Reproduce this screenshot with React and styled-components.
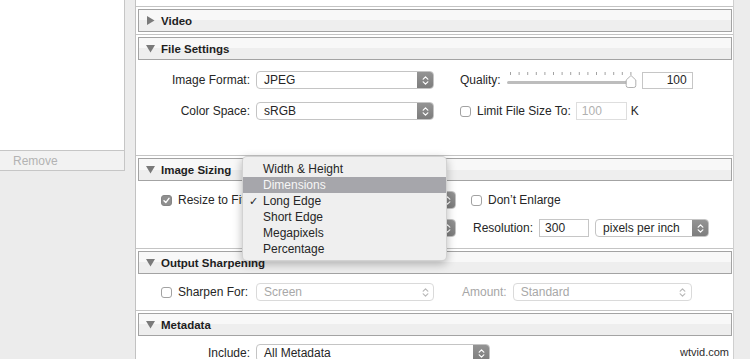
import styled, { createGlobalStyle } from "styled-components";

/* ================================
   Global
   ================================ */

const GlobalStyle = createGlobalStyle`
  html, body {
    margin: 0;
    padding: 0;
    background: #ececec;
  }
  body {
    font-family: "Liberation Sans", Arial, sans-serif;
    overflow: hidden;
  }
`;

/* ================================
   Frame
   ================================ */

const Window = styled.div`
  position: relative;
  display: flex;
  width: 750px;
  height: 359px;
  overflow: hidden;
  background: #ececec;
  color: #262626;
  font-size: 12px;
`;

const Sidebar = styled.div`
  width: 125px;
  flex-shrink: 0;
  display: flex;
  flex-direction: column;
`;

const PresetList = styled.div`
  height: 150px;
  background: #fff;
  border-right: 1px solid #c6c6c6;
  border-bottom: 1px solid #c6c6c6;
`;

const RemoveBar = styled.div`
  height: 19px;
  display: flex;
  align-items: center;
  padding-left: 13px;
  background: #f2f2f2;
  border-right: 1px solid #c6c6c6;
  border-bottom: 1px solid #c6c6c6;
  color: #b3b3b3;
`;

const Main = styled.div`
  width: 597px;
  margin-left: 10px;
  flex-shrink: 0;
  display: flex;
  flex-direction: column;
  padding-top: 6px;
  background: #fff;
  border-left: 1px solid #c2c2c2;
  border-right: 1px solid #cfcfcf;
`;

/* ================================
   Sections
   ================================ */

const Section = styled.div`
  border-top: 1px solid #c4c4c4;
  padding-top: 2px;
`;

const Header = styled.div`
  height: 21px;
  margin: 0 1px 0 2px;
  display: flex;
  align-items: center;
  gap: 6px;
  padding-left: 7px;
  border: 1px solid #a3a3a3;
  background: linear-gradient(#f8f8f8 0 50%, #eeeeee 50%);
  font-size: 11.5px;
  font-weight: bold;
  color: #1e1e1e;
`;

const Body = styled.div`
  height: ${(p) => p.$h}px;
  padding-top: ${(p) => p.$pad || 0}px;
  box-sizing: border-box;
  display: flex;
  flex-direction: column;
  gap: ${(p) => p.$gap || 0}px;
`;

const Row = styled.div`
  display: flex;
  align-items: center;
  height: 18px;
`;

const LabelCell = styled.div`
  width: 120px;
  flex-shrink: 0;
  box-sizing: border-box;
  display: flex;
  align-items: center;
  justify-content: ${(p) => (p.$left ? "flex-start" : "flex-end")};
  gap: 6px;
  padding: ${(p) => (p.$left ? "0 0 0 25px" : "0 6px 0 0")};
  white-space: nowrap;
`;

const Text = styled.span`
  white-space: nowrap;
  margin-left: ${(p) => p.$ml || 0}px;
  color: ${(p) => (p.$muted ? "#a6a6a6" : "inherit")};
`;

/* ================================
   Controls
   ================================ */

const SelectBox = styled.div`
  display: flex;
  align-items: center;
  width: ${(p) => p.$w}px;
  height: 18px;
  margin-left: ${(p) => p.$ml || 0}px;
  box-sizing: border-box;
  flex-shrink: 0;
  border: 1px solid ${(p) => (p.$disabled ? "#dadada" : "#c4c4c4")};
  border-radius: 4px;
  background: #fff;
  padding-left: 7px;
  overflow: hidden;
  color: ${(p) => (p.$disabled ? "#a8a8a8" : "#262626")};
`;

const Stepper = styled.span`
  margin-left: auto;
  width: 16px;
  align-self: stretch;
  display: flex;
  align-items: center;
  justify-content: center;
  background: ${(p) =>
    p.$disabled ? "transparent" : "linear-gradient(#949494, #7d7d7d)"};
`;

const Field = styled.div`
  width: ${(p) => p.$w}px;
  height: ${(p) => p.$h || 18}px;
  margin-left: ${(p) => p.$ml || 0}px;
  box-sizing: border-box;
  flex-shrink: 0;
  display: flex;
  align-items: center;
  justify-content: ${(p) => (p.$right ? "flex-end" : "flex-start")};
  padding: 0 5px;
  border: 1px solid ${(p) => (p.$disabled ? "#dedede" : "#c6c6c6")};
  background: #fff;
  color: ${(p) => (p.$disabled ? "#b0b0b0" : "#262626")};
`;

const Box = styled.span`
  width: 11px;
  height: 11px;
  flex-shrink: 0;
  margin-left: ${(p) => p.$ml || 0}px;
  box-sizing: border-box;
  border-radius: 3px;
  display: flex;
  align-items: center;
  justify-content: center;
  border: 1px solid ${(p) => (p.$checked ? "#858585" : "#a2a2a2")};
  background: ${(p) => (p.$checked ? "#8f8f8f" : "#fff")};
`;

const Menu = styled.div`
  position: absolute;
  left: 242px;
  top: 156px;
  width: 205px;
  box-sizing: border-box;
  padding: 4px 0 3px;
  border-radius: 5px;
  background: #efefef;
  border: 1px solid rgba(0, 0, 0, 0.12);
  box-shadow: 0 3px 10px rgba(0, 0, 0, 0.28);
`;

const MenuItem = styled.div`
  position: relative;
  height: 16px;
  display: flex;
  align-items: center;
  padding-left: 20px;
  background: ${(p) => (p.$active ? "#a6a6ab" : "transparent")};
  color: ${(p) => (p.$active ? "#f6f6f6" : "#262626")};
`;

const Check = styled.span`
  position: absolute;
  left: 6px;
  font-size: 11px;
`;

const Watermark = styled.div`
  position: absolute;
  right: 21px;
  bottom: 1px;
  font-size: 11px;
  color: #2c2c2c;
`;

/* ================================
   Drawings
   ================================ */

const Triangle = ({ open }) => (
  <svg width="9" height="9" viewBox="0 0 9 9">
    {open ? (
      <path d="M0 1 H9 L4.5 8.5 Z" fill="#7a7a7a" />
    ) : (
      <path d="M1 0 V9 L8.5 4.5 Z" fill="#7a7a7a" />
    )}
  </svg>
);

const Chevrons = ({ color }) => (
  <svg width="7" height="11" viewBox="0 0 7 11">
    <path
      d="M1.2 4.2 L3.5 1.8 L5.8 4.2 M1.2 6.8 L3.5 9.2 L5.8 6.8"
      fill="none"
      stroke={color}
      strokeWidth="1.2"
      strokeLinecap="round"
      strokeLinejoin="round"
    />
  </svg>
);

const Select = ({ w, ml, value, disabled }) => (
  <SelectBox $w={w} $ml={ml} $disabled={disabled}>
    {value}
    <Stepper $disabled={disabled}>
      <Chevrons color={disabled ? "#b9b9b9" : "#fff"} />
    </Stepper>
  </SelectBox>
);

const Checkbox = ({ checked, ml }) => (
  <Box $checked={checked} $ml={ml}>
    {checked && (
      <svg width="7" height="7" viewBox="0 0 7 7">
        <path
          d="M1 3.8 L2.8 5.6 L6 1.3"
          fill="none"
          stroke="#fff"
          strokeWidth="1.4"
          strokeLinecap="round"
          strokeLinejoin="round"
        />
      </svg>
    )}
  </Box>
);

const Slider = () => (
  <svg width="132" height="18" viewBox="0 0 132 18" style={{ marginLeft: 6 }}>
    {Array.from({ length: 15 }, (_, i) => (
      <rect key={i} x={3 + i * 8.6} y="1" width="1" height="3" fill="#a2a2a2" />
    ))}
    <rect x="0" y="10" width="126" height="3" rx="1.5" fill="#bdbdbd" />
    <path
      d="M124 4.5 L128.8 9 V14.5 Q128.8 16.5 126.8 16.5 H121.2 Q119.2 16.5 119.2 14.5 V9 Z"
      fill="#fff"
      stroke="#9d9d9d"
      strokeWidth="0.8"
    />
  </svg>
);

/* ================================
   Render
   ================================ */

const sizes = [
  "Width & Height",
  "Dimensions",
  "Long Edge",
  "Short Edge",
  "Megapixels",
  "Percentage",
];

export default function App() {
  return (
    <Window>
      <GlobalStyle />
      <Sidebar>
        <PresetList />
        <RemoveBar>Remove</RemoveBar>
      </Sidebar>

      <Main>
        <Section>
          <Header>
            <Triangle />
            Video
          </Header>
          <Body $h={2} />
        </Section>

        <Section>
          <Header>
            <Triangle open />
            File Settings
          </Header>
          <Body $h={95} $pad={11} $gap={13}>
            <Row>
              <LabelCell>Image Format:</LabelCell>
              <Select w={178} value="JPEG" />
              <Text $ml={26}>Quality:</Text>
              <Slider />
              <Field $w={51} $h={17} $ml={3} $right>
                100
              </Field>
            </Row>
            <Row>
              <LabelCell>Color Space:</LabelCell>
              <Select w={178} value="sRGB" />
              <Checkbox ml={26} />
              <Text $ml={6}>Limit File Size To:</Text>
              <Field $w={51} $ml={5} $disabled>
                100
              </Field>
              <Text $ml={4}>K</Text>
            </Row>
          </Body>
        </Section>

        <Section>
          <Header>
            <Triangle open />
            Image Sizing
          </Header>
          <Body $h={67} $pad={10} $gap={10}>
            <Row>
              <LabelCell $left>
                <Checkbox checked />
                Resize to Fit:
              </LabelCell>
              {/* the popup menu below lies over this select */}
              <Select w={200} />
              <Checkbox ml={15} />
              <Text $ml={6}>Don’t Enlarge</Text>
            </Row>
            <Row>
              <LabelCell />
              <Field $w={50} />
              <Select w={144} ml={6} />
              <Text $ml={17}>Resolution:</Text>
              <Field $w={50} $ml={6}>
                300
              </Field>
              <Select w={114} ml={6} value="pixels per inch" />
            </Row>
          </Body>
        </Section>

        <Section>
          <Header>
            <Triangle open />
            Output Sharpening
          </Header>
          <Body $h={36} $pad={9}>
            <Row>
              <LabelCell $left>
                <Checkbox />
                Sharpen For:
              </LabelCell>
              <Select w={178} value="Screen" disabled />
              <Text $ml={28} $muted>
                Amount:
              </Text>
              <Select w={179} ml={6} value="Standard" disabled />
            </Row>
          </Body>
        </Section>

        <Section>
          <Header>
            <Triangle open />
            Metadata
          </Header>
          <Body $h={40} $pad={8}>
            <Row>
              <LabelCell>Include:</LabelCell>
              <Select w={234} value="All Metadata" />
            </Row>
          </Body>
        </Section>
      </Main>

      <Menu>
        {sizes.map((s) => (
          <MenuItem key={s} $active={s === "Dimensions"}>
            {s === "Long Edge" && <Check>✓</Check>}
            {s}
          </MenuItem>
        ))}
      </Menu>

      <Watermark>wtvid.com</Watermark>
    </Window>
  );
}
